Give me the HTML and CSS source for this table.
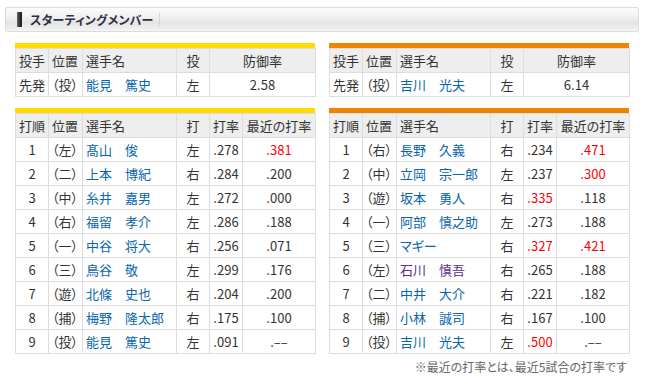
FILE: index.html
```html
<!DOCTYPE html>
<html lang="ja">
<head>
<meta charset="utf-8">
<title>スターティングメンバー</title>
<link rel="stylesheet" href="styles.css">
</head>
<body>
<div class="page">
  <div class="title-bar">
    <span class="mark"></span>
    <h2 class="title">スターティングメンバー</h2>
  </div>

  <div class="teams">
    <div class="block home">
      <table class="grid pitcher">
        <colgroup><col class="c1"><col class="c2"><col class="c3"><col class="c4"><col class="c5p"></colgroup>
        <tr><th class="l">投手</th><th class="l">位置</th><th class="l">選手名</th><th>投</th><th>防御率</th></tr>
        <tr><td class="l">先発</td><td class="l">（投）</td><td class="l"><a>能見　篤史</a></td><td>左</td><td>2.58</td></tr>
      </table>
    </div>

    <div class="block away">
      <table class="grid pitcher">
        <colgroup><col class="c1"><col class="c2"><col class="c3"><col class="c4"><col class="c5p"></colgroup>
        <tr><th class="l">投手</th><th class="l">位置</th><th class="l">選手名</th><th>投</th><th>防御率</th></tr>
        <tr><td class="l">先発</td><td class="l">（投）</td><td class="l"><a>吉川　光夫</a></td><td>左</td><td>6.14</td></tr>
      </table>
    </div>

    <div class="block home">
      <table class="grid order">
        <colgroup><col class="c1"><col class="c2"><col class="c3"><col class="c4"><col class="c5"><col class="c6"></colgroup>
        <tr><th class="l">打順</th><th class="l">位置</th><th class="l">選手名</th><th>打</th><th>打率</th><th>最近の打率</th></tr>
        <tr><td>1</td><td class="l">（左）</td><td class="l"><a>髙山　俊</a></td><td>左</td><td>.278</td><td class="hot">.381</td></tr>
        <tr><td>2</td><td class="l">（二）</td><td class="l"><a>上本　博紀</a></td><td>右</td><td>.284</td><td>.200</td></tr>
        <tr><td>3</td><td class="l">（中）</td><td class="l"><a>糸井　嘉男</a></td><td>左</td><td>.272</td><td>.000</td></tr>
        <tr><td>4</td><td class="l">（右）</td><td class="l"><a>福留　孝介</a></td><td>左</td><td>.286</td><td>.188</td></tr>
        <tr><td>5</td><td class="l">（一）</td><td class="l"><a>中谷　将大</a></td><td>右</td><td>.256</td><td>.071</td></tr>
        <tr><td>6</td><td class="l">（三）</td><td class="l"><a>鳥谷　敬</a></td><td>左</td><td>.299</td><td>.176</td></tr>
        <tr><td>7</td><td class="l">（遊）</td><td class="l"><a>北條　史也</a></td><td>右</td><td>.204</td><td>.200</td></tr>
        <tr><td>8</td><td class="l">（捕）</td><td class="l"><a>梅野　隆太郎</a></td><td>右</td><td>.175</td><td>.100</td></tr>
        <tr><td>9</td><td class="l">（投）</td><td class="l"><a>能見　篤史</a></td><td>左</td><td>.091</td><td>.––</td></tr>
      </table>
    </div>

    <div class="block away">
      <table class="grid order">
        <colgroup><col class="c1"><col class="c2"><col class="c3"><col class="c4"><col class="c5"><col class="c6"></colgroup>
        <tr><th class="l">打順</th><th class="l">位置</th><th class="l">選手名</th><th>打</th><th>打率</th><th>最近の打率</th></tr>
        <tr><td>1</td><td class="l">（右）</td><td class="l"><a>長野　久義</a></td><td>右</td><td>.234</td><td class="hot">.471</td></tr>
        <tr><td>2</td><td class="l">（中）</td><td class="l"><a>立岡　宗一郎</a></td><td>左</td><td>.237</td><td class="hot">.300</td></tr>
        <tr><td>3</td><td class="l">（遊）</td><td class="l"><a>坂本　勇人</a></td><td>右</td><td class="hot">.335</td><td>.118</td></tr>
        <tr><td>4</td><td class="l">（一）</td><td class="l"><a>阿部　慎之助</a></td><td>左</td><td>.273</td><td>.188</td></tr>
        <tr><td>5</td><td class="l">（三）</td><td class="l"><a>マギー</a></td><td>右</td><td class="hot">.327</td><td class="hot">.421</td></tr>
        <tr><td>6</td><td class="l">（左）</td><td class="l"><a class="visited">石川　慎吾</a></td><td>右</td><td>.265</td><td>.188</td></tr>
        <tr><td>7</td><td class="l">（二）</td><td class="l"><a>中井　大介</a></td><td>右</td><td>.221</td><td>.182</td></tr>
        <tr><td>8</td><td class="l">（捕）</td><td class="l"><a>小林　誠司</a></td><td>右</td><td>.167</td><td>.100</td></tr>
        <tr><td>9</td><td class="l">（投）</td><td class="l"><a>吉川　光夫</a></td><td>左</td><td class="hot">.500</td><td>.––</td></tr>
      </table>
    </div>
  </div>

  <p class="note">※最近の打率とは、最近5試合の打率です</p>
</div>
</body>
</html>
```

FILE: styles.css
```css
html, body {
  margin: 0;
  padding: 0;
  background: #fff;
}

body {
  font-family: "Noto Sans CJK JP", "Noto Sans", sans-serif;
  font-size: 13px;
  color: #333;
  font-feature-settings: "palt";
}

.page {
  width: 645px;
  padding-top: 7px;
}

.title-bar {
  display: flex;
  align-items: center;
  height: 23px;
  margin: 0 6px 0 5px;
  border: 1px solid #dcdcdc;
  border-radius: 2px;
  background: linear-gradient(#fbfbfb 0%, #f1f1f1 40%, #e4e4e4 62%, #ececec 85%, #f6f6f6 100%);
  padding-left: 11px;
}

.mark {
  width: 5px;
  height: 15px;
  background: linear-gradient(90deg, #6a6a6a, #2a2a2a 60%, #1e1e1e);
  margin-right: 8px;
}

.title {
  margin: 0;
  font-size: 12px;
  font-weight: bold;
  color: #2f2f45;
  line-height: 13px;
  padding-right: 5px;
  border-right: 1px dotted #c4c4c4;
  letter-spacing: 0.2px;
}

.teams {
  display: grid;
  grid-template-columns: 300px 300px;
  column-gap: 14px;
  row-gap: 11px;
  margin: 11px 0 0 15px;
}

.block {
  border-top: 5px solid #ffdb00;
}

.block.away {
  border-top-color: #f08300;
}

.grid {
  width: 300px;
  table-layout: fixed;
  border-collapse: collapse;
}

.grid th,
.grid td {
  border: 1px solid #dddddd;
  height: 23px;
  padding: 0 3px;
  line-height: 23px;
  text-align: center;
  white-space: nowrap;
  overflow: hidden;
  font-weight: normal;
}

.grid th {
  background: #eeeeee;
}

.grid .l {
  text-align: left;
}

.grid a {
  color: #0866ad;
  text-decoration: none;
}

.grid a.visited {
  color: #5b2a8a;
}

.grid td.hot {
  color: #ff0000;
}

.c1 { width: 33px; }
.c2 { width: 34px; }
.c3 { width: 94px; }
.c4 { width: 33px; }
.c5 { width: 33px; }
.c5p { width: 106px; }
.c6 { width: 73px; }

.note {
  margin: 5px 0 0 15px;
  width: 612px;
  text-align: right;
  font-size: 12px;
  color: #666;
  line-height: 16px;
}
```
